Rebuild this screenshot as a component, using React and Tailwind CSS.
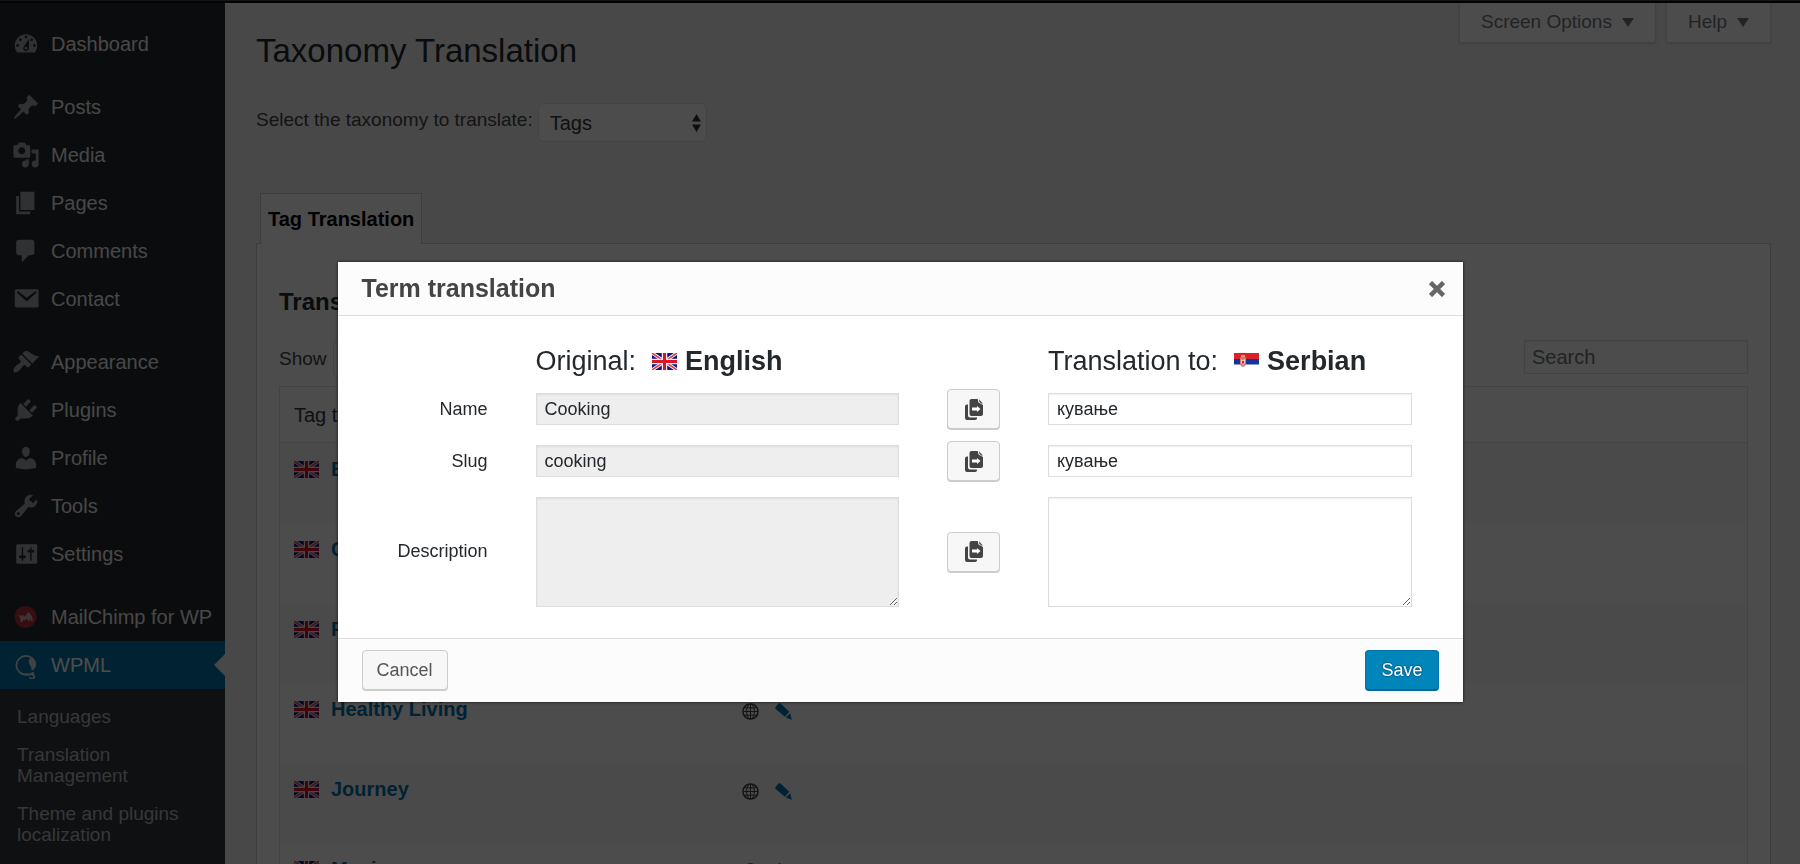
import React from 'react';

const menuGroups = [
  [
    { label: 'Dashboard', d: 'M3.76 16h12.48c1.1-1.37 1.76-3.11 1.76-5 0-4.42-3.58-8-8-8s-8 3.58-8 8c0 1.89.66 3.63 1.76 5zM10 4c.55 0 1 .45 1 1s-.45 1-1 1-1-.45-1-1 .45-1 1-1zM6 6c.55 0 1 .45 1 1s-.45 1-1 1-1-.45-1-1 .45-1 1-1zm8 0c.55 0 1 .45 1 1s-.45 1-1 1-1-.45-1-1 .45-1 1-1zM12.2 6.2L12 13c0 1.1-.9 2-2 2s-2-.9-2-2c0-.57.24-1.08.63-1.45zM4 10c.55 0 1 .45 1 1s-.45 1-1 1-1-.45-1-1 .45-1 1-1zm12 0c.55 0 1 .45 1 1s-.45 1-1 1-1-.45-1-1 .45-1 1-1zm-5 3c0-.55-.45-1-1-1s-1 .45-1 1 .45 1 1 1 1-.45 1-1z' },
  ],
  [
    { label: 'Posts', d: 'M10.44 3.02l1.82-1.82 6.36 6.35-1.83 1.82c-1.05-.68-2.48-.57-3.41.36l-.75.75c-.92.93-1.04 2.35-.35 3.41l-1.83 1.82-2.41-2.41-2.8 2.79c-.42.42-3.38 2.71-3.8 2.29s1.86-3.39 2.28-3.81l2.79-2.79L4.1 9.36l1.83-1.82c1.05.69 2.48.57 3.4-.36l.75-.75c.93-.92 1.05-2.35.36-3.41z' },
    { label: 'Media', d: 'M13 11V4c0-.55-.45-1-1-1h-1.67L9 1H5L3.67 3H2c-.55 0-1 .45-1 1v7c0 .55.45 1 1 1h10c.55 0 1-.45 1-1zM7 4.5c1.38 0 2.5 1.12 2.5 2.5S8.38 9.5 7 9.5 4.5 8.38 4.5 7 5.62 4.5 7 4.5zM14 6h5v10.5c0 1.38-1.12 2.5-2.5 2.5S14 17.88 14 16.5s1.12-2.5 2.5-2.5c.17 0 .34.02.5.05V9h-3V6zm-4 8.05V13h2v3.5c0 1.38-1.12 2.5-2.5 2.5S7 17.88 7 16.5 8.12 14 9.5 14c.17 0 .34.02.5.05z' },
    { label: 'Pages', d: 'M6 15V2h10v13H6zm-1 1h8v2H3V5h2v11z' },
    { label: 'Comments', d: 'M5 2h9c1.1 0 2 .9 2 2v7c0 1.1-.9 2-2 2h-2l-5 5v-5H5c-1.1 0-2-.9-2-2V4c0-1.1.9-2 2-2z' },
    { label: 'Contact', d: 'M3 3h15c.55 0 1 .45 1 1v11c0 .55-.45 1-1 1H3c-.55 0-1-.45-1-1V4c0-.55.45-1 1-1zm.6 2.6l6.9 6.2 6.9-6.2c.5-.5-.5-1.4-1-.9l-5.9 4.4-5.9-4.4c-.5-.5-1.5.4-1 .9z' },
  ],
  [
    { label: 'Appearance', d: 'M14.48 11.06L7.41 3.99l1.5-1.5c.5-.56 2.3-.47 3.51.32 1.21.8 1.43 1.28 2.91 2.1 1.18.64 2.45 1.26 4.45.85zm-.71.71L6.7 4.7 4.93 6.47c-.39.39-.39 1.02 0 1.41l1.06 1.06c.39.39.39 1.03 0 1.42-.6.6-1.43 1.11-2.21 1.69-.35.26-.7.53-1.01.84C1.43 14.23.4 16.08 1.4 17.07c.99 1 2.84-.03 4.18-1.36.31-.31.58-.66.85-1.02.57-.78 1.08-1.61 1.69-2.21.39-.39 1.02-.39 1.41 0l1.06 1.06c.39.39 1.02.39 1.41 0z' },
    { label: 'Plugins', d: 'M13.11 4.36L9.87 7.6 8 5.73l3.24-3.24c.35-.34 1.05-.2 1.56.32.52.51.66 1.21.31 1.55zm-8 1.77l.91-1.12 9.01 9.01-1.19.84c-.71.71-2.63 1.16-3.82 1.16H6.14L4.9 17.26c-.59.59-1.54.59-2.12 0-.59-.58-.59-1.53 0-2.12l1.24-1.24v-3.88c0-1.13.4-3.19 1.09-3.89zm7.26 3.97l3.24-3.24c.34-.35 1.04-.21 1.55.31.52.51.66 1.21.31 1.55l-3.24 3.25z' },
    { label: 'Profile', d: 'M10 9.25c-2.27 0-2.73-3.44-2.73-3.44C7 4.02 7.82 2 9.97 2c2.16 0 2.98 2.02 2.71 3.81 0 0-.41 3.44-2.68 3.44zm0 2.57L12.72 10c2.39 0 4.52 2.33 4.52 4.53v2.49s-3.65 1.13-7.24 1.13c-3.65 0-7.24-1.13-7.24-1.13v-2.49c0-2.25 1.94-4.48 4.47-4.48z' },
    { label: 'Tools', d: 'M16.68 9.77c-1.34 1.34-3.3 1.67-4.95.99l-5.41 6.52c-.99.99-2.59.99-3.58 0s-.99-2.59 0-3.57l6.52-5.42c-.68-1.65-.35-3.61.99-4.95 1.28-1.28 3.12-1.62 4.72-1.06l-2.89 2.89 2.82 2.82 2.86-2.87c.53 1.58.18 3.39-1.08 4.65zM3.81 16.21c.4.39 1.04.39 1.43 0 .4-.4.4-1.04 0-1.43-.39-.4-1.03-.4-1.43 0-.39.39-.39 1.03 0 1.43z' },
    { label: 'Settings', d: 'M18 16V4c0-.55-.45-1-1-1H4c-.55 0-1 .45-1 1v12c0 .55.45 1 1 1h13c.55 0 1-.45 1-1zM8 11h1c.55 0 1 .45 1 1s-.45 1-1 1H8v1.5c0 .28-.22.5-.5.5s-.5-.22-.5-.5V13H6c-.55 0-1-.45-1-1s.45-1 1-1h1V5.5c0-.28.22-.5.5-.5s.5.22.5.5V11zm5-2h-1c-.55 0-1-.45-1-1s.45-1 1-1h1V5.5c0-.28.22-.5.5-.5s.5.22.5.5V7h1c.55 0 1 .45 1 1s-.45 1-1 1h-1v5.5c0 .28-.22.5-.5.5s-.5-.22-.5-.5V9z' },
  ],
];

const submenu = ['Languages', 'Translation Management', 'Theme and plugins localization'];

const terms = ['Baking', 'Cooking', 'Food', 'Healthy Living', 'Journey', 'Music'];

const UkFlag = () => (
  <svg viewBox="0 0 50 34" className="w-[25px] h-[17px] shrink-0" aria-hidden="true">
    <rect width="50" height="34" fill="#14147c" />
    <path d="M0 0l50 34M50 0L0 34" stroke="#f3e9f0" strokeWidth="7" />
    <path d="M0 0l50 34M50 0L0 34" stroke="#d8434f" strokeWidth="3" />
    <path d="M25 0v34M0 17h50" stroke="#f3e9f0" strokeWidth="11" />
    <path d="M25 0v34M0 17h50" stroke="#d8152b" strokeWidth="6" />
  </svg>
);

const SerbianFlag = () => (
  <svg viewBox="0 0 50 34" className="w-[25px] h-[17px] shrink-0" aria-hidden="true">
    <rect width="50" height="34" fill="#fff" />
    <rect width="50" height="12" fill="#dc2027" />
    <rect y="12" width="50" height="11" fill="#12349b" />
    <path d="M12 9h12v12c0 4-3 6-6 7-3-1-6-3-6-7z" fill="#d9776b" />
    <path d="M14 4h8v5h-8z" fill="#dba052" />
    <path d="M14 12l4 3 4-3v8l-4 4-4-4z" fill="#f0c9c6" />
    <path d="M16 16h4v5h-4z" fill="#cc2b36" />
  </svg>
);

const GlobeIcon = () => (
  <svg viewBox="0 0 17 17" className="w-[17px] h-[17px]" fill="none" stroke="#444" aria-hidden="true">
    <circle cx="8.5" cy="8.5" r="7.6" strokeWidth="1.5" />
    <ellipse cx="8.5" cy="8.5" rx="3.9" ry="7.5" />
    <path d="M8.5 1v15M1.5 8.5h14M2.5 4.8h12M2.5 12.2h12" />
  </svg>
);

const PencilIcon = () => (
  <svg viewBox="0 0 17 17" className="w-[17px] h-[17px]" fill="#0073aa" aria-hidden="true">
    <path d="M.6 4L3.6.6c.5-.6 1.3-.6 1.9-.1l8.8 8.3-4.4 5L.8 5.9C.2 5.400.1 4.600.6 4z" />
    <path d="M15.2 10.2l1.6 6.6-6-2.4z" />
  </svg>
);

const CopyIcon = () => (
  <svg viewBox="0 0 18 21" className="w-[18px] h-[21px]" fill="#444" aria-hidden="true">
    <path d="M6.5 0h6.200l.8 3.600L18 6v9a2 2 0 0 1-2 2H6.500a2 2 0 0 1-2-2V2a2 2 0 0 1 2-2z" />
    <path d="M14 .2L17.800 4.600h-1.600L14.400 2.800z" />
    <path d="M0 7.500a2 2 0 0 1 2-2h1V16.500a2 2 0 0 0 2 2h7A2 2 0 0 1 10 21H2a2 2 0 0 1-2-2z" />
    <path d="M7 8.500h5V7l3.500 3-3.500 3v-1.500H7z" fill="#fff" />
  </svg>
);

const MailChimpIcon = () => (
  <svg viewBox="0 0 28 28" className="w-7 h-7" aria-hidden="true">
    <circle cx="13.5" cy="14" r="11" fill="#b5303c" />
    <path d="M6 11.5l2.500 1.200 2.500-.5 2 1.300 3.200-4.200 1.600 1.200 2.200 3 .8 5-1.500-.2-1-2.500-.6 2-2-.2-.8-2.200-1.700 1.800-2.200-.3-.5 2.300-2-.2-.3-4z" fill="#c9b0b2" />
  </svg>
);

const WpmlIcon = () => (
  <svg viewBox="0 0 28 28" className="w-7 h-7" fill="none" stroke="#d5dee4" aria-hidden="true">
    <path d="M22 21.500c-4.500 3.200-11 3-14.600-.5-4-3.900-4-9.700-.4-13.200 3.800-3.700 10-3.800 13.500-.3 1.600 1.600 2.500 3.500 2.700 5.500" strokeWidth="1.800" />
    <path d="M17.500 7.500c3-.8 6.500 2 6.500 6 0 3.200-2 5.500-5 6.300.8-1.600.7-2.800-.3-4.300-1.600-2.400-3-5.500-1.200-8z" fill="#d5dee4" stroke="none" />
    <path d="M13 22.800c2.500 1.700 4.800.4 6.800.6 3 .3 3.200 4.300.3 4.400-1.500 0-2.300-.8-2-1.800" strokeWidth="1.800" />
  </svg>
);

const SelectBox = ({ id, className, children }) => (
  <div className={`relative ${className}`}>
    <select id={id} className="appearance-none w-full h-full bg-white border border-[#ddd] rounded-md pl-[11px] pr-7 text-[20px] text-[#32373c]">
      {children}
    </select>
    <svg viewBox="0 0 9 18" className="absolute right-[6px] top-1/2 -translate-y-1/2 w-[9px] h-[18px] pointer-events-none" fill="#333" aria-hidden="true">
      <path d="M0 7.5L4.5 0 9 7.5zM0 10.5h9L4.5 18z" />
    </svg>
  </div>
);

const CopyButton = ({ label }) => (
  <button aria-label={label} className="h-10 bg-[#f7f7f7] border border-[#ccc] rounded shadow-[0_1px_0_#ccc] flex items-center justify-center">
    <CopyIcon />
  </button>
);

const Sidebar = () => (
  <aside className="w-[225px] shrink-0 bg-[#23282d] pt-[17px]">
    <nav>
      {menuGroups.map((group) => (
        <ul key={group[0].label} className="mb-[15px]">
          {group.map((item) => (
            <li key={item.label}>
              <a href="#" className="h-12 pl-3 flex items-center gap-[11px] text-[20px] text-[#eee]">
                <svg viewBox="0 0 20 20" className="w-7 h-7" fill="#a0a5aa" fillRule="evenodd" aria-hidden="true">
                  <path d={item.d} />
                </svg>
                {item.label}
              </a>
            </li>
          ))}
        </ul>
      ))}
      <a href="#" className="h-12 pl-3 flex items-center gap-[11px] text-[20px] text-[#eee] whitespace-nowrap">
        <MailChimpIcon />
        MailChimp for WP
      </a>
      <a href="#" className="relative h-12 pl-3 flex items-center gap-[11px] text-[20px] text-white bg-[#0073aa]">
        <WpmlIcon />
        WPML
        <svg viewBox="0 0 11 22" className="absolute right-0 top-[13px] w-[11px] h-[22px]" fill="#f1f1f1" aria-hidden="true">
          <path d="M11 0v22L0 11z" />
        </svg>
      </a>
      <ul className="bg-[#32373c] px-[17px] pt-[17px] pb-8 flex flex-col gap-[17px] text-[19px] leading-[21px] text-[#b4b9be]">
        {submenu.map((label) => (
          <li key={label}><a href="#">{label}</a></li>
        ))}
      </ul>
    </nav>
  </aside>
);

const ScreenMetaButton = ({ children }) => (
  <button className="h-10 px-[21px] flex items-center gap-[10px] bg-white border border-t-0 border-[#ddd] shadow-sm text-[19px] text-[#72777c]">
    {children}
    <svg viewBox="0 0 12 9" className="w-3 h-[9px]" fill="#72777c" aria-hidden="true">
      <path d="M0 0h12L6 9z" />
    </svg>
  </button>
);

const TermsTable = () => (
  <table className="w-full table-fixed border border-[#e1e1e1] border-separate border-spacing-0">
    <thead>
      <tr className="h-14 text-[20px] text-[#32373c]">
        <th className="w-[31.5%] pl-[14px] text-left font-normal border-b border-[#e1e1e1]">Tag terms</th>
        <th className="border-b border-[#e1e1e1]"></th>
      </tr>
    </thead>
    <tbody>
      {terms.map((term) => (
        <tr key={term} className="h-20 odd:bg-[#f9f9f9] align-top">
          <td className="pl-[14px] pt-[14px]">
            <div className="flex items-center gap-3">
              <UkFlag />
              <a href="#" className="text-[20px] leading-6 font-bold text-[#0073aa]">{term}</a>
            </div>
          </td>
          <td className="pt-[14px]">
            <div className="flex items-center gap-4 h-7">
              <GlobeIcon />
              <button aria-label={`Edit ${term}`}><PencilIcon /></button>
            </div>
          </td>
        </tr>
      ))}
    </tbody>
  </table>
);

const TermModal = () => (
  <div className="fixed inset-0 bg-black/70 pt-[262px]">
    <div role="dialog" aria-labelledby="modal-title" className="w-5/8 mx-auto bg-white shadow-[0_0_3px_rgba(0,0,0,0.8)] text-[18px] text-[#23282d]">

      {/* Title bar */}
      <div className="h-[54px] px-6 flex items-center justify-between bg-[#fcfcfc] border-b border-[#ddd]">
        <h2 id="modal-title" className="text-[25px] font-bold text-[#444]">Term translation</h2>
        <button aria-label="Close" className="-mr-[10px] p-1">
          <svg viewBox="0 0 16 16" className="w-4 h-4" stroke="#666" strokeWidth="4.5" aria-hidden="true">
            <path d="M1.5 1.5l13 13M14.5 1.5l-13 13" />
          </svg>
        </button>
      </div>

      {/* Fields */}
      <div className="grid grid-cols-[126px_1fr_53px_1fr] gap-x-12 gap-y-3 items-center pt-[29px] pb-7 pl-6 pr-[51px]">
        <h3 className="col-start-2 flex items-center text-[27px] leading-8">
          <span className="mr-4">Original:</span>
          <UkFlag />
          <strong className="ml-2">English</strong>
        </h3>
        <h3 className="col-start-4 flex items-center text-[27px] leading-8">
          <span className="mr-4">Translation to:</span>
          <SerbianFlag />
          <strong className="ml-2">Serbian</strong>
        </h3>

        <label htmlFor="name" className="text-right">Name</label>
        <input aria-label="Original name" readOnly defaultValue="Cooking" className="w-full h-8 px-2 bg-[#eee] border border-[#ddd] shadow-[inset_0_1px_2px_rgba(0,0,0,0.07)]" />
        <CopyButton label="Copy name" />
        <input id="name" defaultValue="кување" className="w-full h-8 px-2 bg-white border border-[#ddd] shadow-[inset_0_1px_2px_rgba(0,0,0,0.07)]" />

        <label htmlFor="slug" className="text-right">Slug</label>
        <input aria-label="Original slug" readOnly defaultValue="cooking" className="w-full h-8 px-2 bg-[#eee] border border-[#ddd] shadow-[inset_0_1px_2px_rgba(0,0,0,0.07)]" />
        <CopyButton label="Copy slug" />
        <input id="slug" defaultValue="кување" className="w-full h-8 px-2 bg-white border border-[#ddd] shadow-[inset_0_1px_2px_rgba(0,0,0,0.07)]" />

        <label htmlFor="description" className="text-right">Description</label>
        <textarea aria-label="Original description" readOnly className="w-full h-[110px] mt-1 mb-[3px] px-2 bg-[#eee] border border-[#ddd] shadow-[inset_0_1px_2px_rgba(0,0,0,0.07)]" />
        <CopyButton label="Copy description" />
        <textarea id="description" className="w-full h-[110px] mt-1 mb-[3px] px-2 bg-white border border-[#ddd] shadow-[inset_0_1px_2px_rgba(0,0,0,0.07)]" />
      </div>

      {/* Actions */}
      <div className="px-6 pt-[11px] pb-3 flex items-center justify-between bg-[#fcfcfc] border-t border-[#ddd]">
        <button className="h-10 px-[14px] bg-[#f7f7f7] border border-[#ccc] rounded shadow-[0_1px_0_#ccc] text-[#555]">Cancel</button>
        <button className="h-10 px-[15px] bg-[#0085ba] border border-[#0073aa] border-b-[#006799] rounded shadow-[0_1px_0_#006799] text-white [text-shadow:0_-1px_1px_#006799,1px_0_1px_#006799,0_1px_1px_#006799,-1px_0_1px_#006799]">Save</button>
      </div>
    </div>
  </div>
);

const App = () => {
  return (
    <div className="h-screen overflow-hidden flex flex-col bg-[#f1f1f1] font-['Liberation_Sans',Arial,sans-serif] text-[#444]">
      <div className="h-[3px] shrink-0 bg-[#0c0d0e] border-t border-[#444]"></div>

      <div className="flex-1 flex">
        <Sidebar />

        <main className="flex-1 min-w-0 pl-[31px] pr-[29px]">
          <div className="flex items-start justify-between">
            <h1 className="mt-7 text-[33px] leading-10 text-[#23282d]">Taxonomy Translation</h1>
            <div className="flex gap-[10px]">
              <ScreenMetaButton>Screen Options</ScreenMetaButton>
              <ScreenMetaButton>Help</ScreenMetaButton>
            </div>
          </div>

          <div className="mt-8 flex items-center gap-[5px]">
            <label htmlFor="taxonomy" className="pb-1 text-[19px]">Select the taxonomy to translate:</label>
            <SelectBox id="taxonomy" className="w-[169px] h-[39px]">
              <option>Tags</option>
            </SelectBox>
          </div>

          <div className="mt-[51px] pl-1 flex">
            <button className="relative h-[51px] -mb-px px-[7px] bg-white border border-b-0 border-[#ccc] text-[20px] font-bold text-black">Tag Translation</button>
          </div>

          <section className="px-[22px] pt-[42px] bg-white border border-[#ccc]">
            <h2 className="text-[24px] leading-8 font-bold text-[#23282d]">Translate terms</h2>

            <div className="mt-[22px] mb-2 flex items-start justify-between">
              <div className="flex items-center gap-[6px]">
                <label htmlFor="show" className="text-[19px]">Show</label>
                <SelectBox id="show" className="w-[180px] h-[38px]">
                  <option>all tags</option>
                </SelectBox>
              </div>
              <input aria-label="Search" placeholder="Search" className="w-56 h-[34px] px-[7px] bg-white border border-[#ddd] shadow-[inset_0_1px_2px_rgba(0,0,0,0.07)] text-[20px] placeholder:text-[#72777c]" />
            </div>

            <TermsTable />
          </section>
        </main>
      </div>

      <TermModal />
    </div>
  );
};

export default App;
